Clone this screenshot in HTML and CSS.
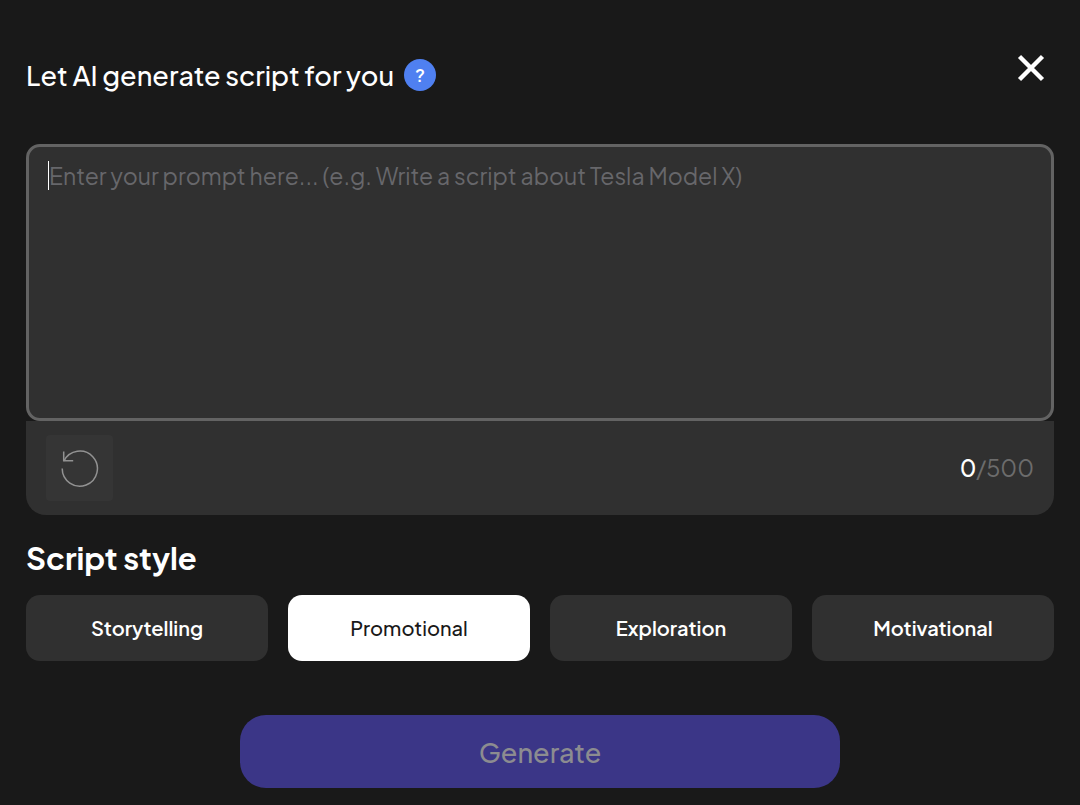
FILE: index.html
```html
<!DOCTYPE html>
<html lang="en">
<head>
    <meta charset="UTF-8">
    <meta name="viewport" content="width=device-width, initial-scale=1.0">
    <title>AI Script Generator</title>
    <link rel="stylesheet" href="styles.css">
</head>
<body>

<main class="modal">
    <header class="modal-header">
        <div class="title-row">
            <h1>Let AI generate script for you</h1>
            <button type="button" class="help-button" aria-label="Help">?</button>
        </div>
        <button type="button" class="close-button" aria-label="Close">
            <svg width="28" height="28" viewBox="0 0 28 28" fill="none" stroke="#fff" stroke-width="4.4">
                <path d="M2.5 2.5 25.5 25.5M25.5 2.5 2.5 25.5"/>
            </svg>
        </button>
    </header>

    <form class="script-form">
        <!-- Prompt box -->
        <div class="prompt-box">
            <textarea id="prompt" maxlength="500" aria-label="Prompt" placeholder="Enter your prompt here... (e.g. Write a script about Tesla Model X)"></textarea>
            <span class="caret"></span>
            <div class="prompt-footer">
                <button type="button" class="reset-button" aria-label="Reset">
                    <svg width="40" height="40" viewBox="0 0 40 40" fill="none" stroke="#929292" stroke-width="1.5">
                        <path d="M2.2 20.5A17.6 17.6 0 1 0 4 12.8"/>
                        <path d="M3.7 3.5V12.8H13.2"/>
                    </svg>
                </button>
                <div class="counter"><span class="count" id="count">0</span>/500</div>
            </div>
        </div>

        <!-- Script style -->
        <h2>Script style</h2>
        <div class="style-list">
            <button type="button" class="style-button">Storytelling</button>
            <button type="button" class="style-button active">Promotional</button>
            <button type="button" class="style-button">Exploration</button>
            <button type="button" class="style-button">Motivational</button>
        </div>

        <button type="submit" class="generate-button" disabled>Generate</button>
    </form>
</main>

</body>
</html>
```
FILE: styles.css
```css
* {
    box-sizing: border-box;
}
body {
    margin: 0;
    background-color: #191919;
    color: #fff;
    font-family: "Plus Jakarta Sans", Inter, sans-serif;
}
button {
    padding: 0;
    border: none;
    font-family: inherit;
    cursor: pointer;
}
.modal {
    padding: 54px 26px 16px;
}
.modal-header {
    display: flex;
    justify-content: space-between;
    align-items: flex-start;
    margin-bottom: 52px;
}
.title-row {
    display: flex;
    align-items: center;
    gap: 10px;
    padding-top: 4px;
}
h1 {
    margin: 0;
    font-size: 27px;
    line-height: 34px;
    font-weight: 500;
}
.help-button {
    width: 32px;
    height: 32px;
    padding-bottom: 2px;
    border-radius: 50%;
    background-color: #4f80f1;
    color: #fff;
    font-size: 18px;
    font-weight: 600;
}
.close-button {
    height: 28px;
    margin-right: 9px;
    background: none;
}
.close-button svg {
    display: block;
}
.script-form {
    display: flex;
    flex-direction: column;
}
.prompt-box {
    position: relative;
}
#prompt {
    display: block;
    width: 100%;
    height: 277px;
    padding: 12px 20px;
    border: 3px solid #636363;
    border-radius: 14px;
    outline: 0;
    background-color: #303030;
    color: #fff;
    font-family: inherit;
    font-size: 23px;
    line-height: 34px;
    resize: none;
}
#prompt::placeholder {
    color: #67676b;
    opacity: 1;
}
/* text cursor shown in the empty prompt */
.caret {
    position: absolute;
    top: 17px;
    left: 22px;
    width: 1px;
    height: 29px;
    background-color: #fff;
}
.prompt-footer {
    display: flex;
    justify-content: space-between;
    align-items: center;
    height: 94px;
    padding: 0 20px;
    border-radius: 0 0 20px 20px;
    background-color: #303030;
}
.reset-button {
    display: flex;
    align-items: center;
    justify-content: center;
    width: 67px;
    height: 66px;
    border-radius: 4px;
    background-color: #353535;
}
.counter {
    color: #6c6c6c;
    font-size: 23px;
    line-height: 34px;
}
.count {
    color: #fff;
    font-weight: 500;
}
h2 {
    margin: 23px 0 17px;
    font-size: 31px;
    line-height: 40px;
    font-weight: 700;
}
.style-list {
    display: grid;
    grid-template-columns: repeat(4, 1fr);
    gap: 20px;
}
.style-button {
    height: 66px;
    padding-bottom: 2px;
    border-radius: 14px;
    background-color: #303030;
    color: #fff;
    font-size: 20px;
    font-weight: 600;
}
.style-button.active {
    background-color: #fff;
    color: #191919;
    font-weight: 500;
}
.generate-button {
    align-self: center;
    width: 600px;
    max-width: 100%;
    height: 73px;
    margin-top: 54px;
    border-radius: 26px;
    background-color: #3b3687;
    color: #8c8c90;
    font-size: 27px;
    font-weight: 500;
}
```
